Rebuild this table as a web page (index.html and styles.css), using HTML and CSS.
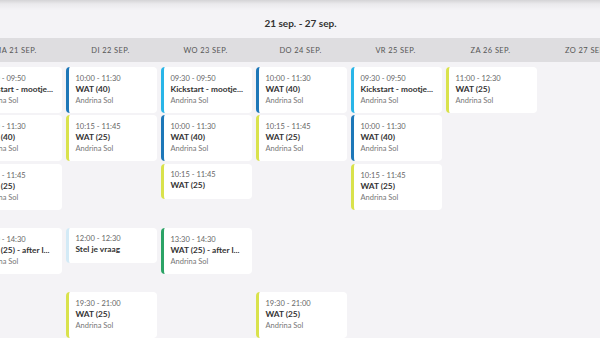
FILE: index.html
```html
<!DOCTYPE html>
<html lang="nl">
<head>
<meta charset="utf-8">
<title>Week</title>
<link rel="stylesheet" href="styles.css">
</head>
<body>
<div class="page">
  <div class="week">
    <div class="title">21 sep. - 27 sep.</div>
    <div class="days">
      <div class="day">MA 21 SEP.</div>
      <div class="day">DI 22 SEP.</div>
      <div class="day">WO 23 SEP.</div>
      <div class="day">DO 24 SEP.</div>
      <div class="day">VR 25 SEP.</div>
      <div class="day">ZA 26 SEP.</div>
      <div class="day">ZO 27 SEP.</div>
    </div>
    <div class="grid">
      <!-- MA -->
      <div class="card cyan c1 r1"><div class="time">09:30 - 09:50</div><div class="name">Kickstart - mootje...</div><div class="who">Andrina Sol</div></div>
      <div class="card blue c1 r2"><div class="time">10:00 - 11:30</div><div class="name">WAT (40)</div><div class="who">Andrina Sol</div></div>
      <div class="card yellow c1 r3"><div class="time">10:15 - 11:45</div><div class="name">WAT (25)</div><div class="who">Andrina Sol</div></div>
      <div class="card green c1 r4"><div class="time">13:30 - 14:30</div><div class="name">WAT (25) - after l...</div><div class="who">Andrina Sol</div></div>
      <!-- DI -->
      <div class="card blue c2 r1"><div class="time">10:00 - 11:30</div><div class="name">WAT (40)</div><div class="who">Andrina Sol</div></div>
      <div class="card yellow c2 r2"><div class="time">10:15 - 11:45</div><div class="name">WAT (25)</div><div class="who">Andrina Sol</div></div>
      <div class="card pale short c2 r4"><div class="time">12:00 - 12:30</div><div class="name">Stel je vraag</div></div>
      <div class="card yellow c2 r5"><div class="time">19:30 - 21:00</div><div class="name">WAT (25)</div><div class="who">Andrina Sol</div></div>
      <!-- WO -->
      <div class="card cyan c3 r1"><div class="time">09:30 - 09:50</div><div class="name">Kickstart - mootje...</div><div class="who">Andrina Sol</div></div>
      <div class="card blue c3 r2"><div class="time">10:00 - 11:30</div><div class="name">WAT (40)</div><div class="who">Andrina Sol</div></div>
      <div class="card yellow short c3 r3"><div class="time">10:15 - 11:45</div><div class="name">WAT (25)</div></div>
      <div class="card green c3 r4"><div class="time">13:30 - 14:30</div><div class="name">WAT (25) - after l...</div><div class="who">Andrina Sol</div></div>
      <!-- DO -->
      <div class="card blue c4 r1"><div class="time">10:00 - 11:30</div><div class="name">WAT (40)</div><div class="who">Andrina Sol</div></div>
      <div class="card yellow c4 r2"><div class="time">10:15 - 11:45</div><div class="name">WAT (25)</div><div class="who">Andrina Sol</div></div>
      <div class="card yellow c4 r5"><div class="time">19:30 - 21:00</div><div class="name">WAT (25)</div><div class="who">Andrina Sol</div></div>
      <!-- VR -->
      <div class="card cyan c5 r1"><div class="time">09:30 - 09:50</div><div class="name">Kickstart - mootje...</div><div class="who">Andrina Sol</div></div>
      <div class="card blue c5 r2"><div class="time">10:00 - 11:30</div><div class="name">WAT (40)</div><div class="who">Andrina Sol</div></div>
      <div class="card yellow c5 r3"><div class="time">10:15 - 11:45</div><div class="name">WAT (25)</div><div class="who">Andrina Sol</div></div>
      <!-- ZA -->
      <div class="card yellow c6 r1"><div class="time">11:00 - 12:30</div><div class="name">WAT (25)</div><div class="who">Andrina Sol</div></div>
    </div>
  </div>
</div>
</body>
</html>
```

FILE: styles.css
```css
html, body {
  margin: 0;
  padding: 0;
  width: 600px;
  height: 338px;
  overflow: hidden;
  background: #f4f3f6;
  font-family: Lato, "Noto Sans", sans-serif;
}

.page {
  width: 600px;
  height: 338px;
  overflow: hidden;
  background: linear-gradient(to bottom, rgba(0, 0, 0, 0.13) 0px, rgba(0, 0, 0, 0.04) 4px, rgba(0, 0, 0, 0) 10px);
}

.week {
  width: 665px;
  margin-left: -32px;
}

.title {
  height: 38px;
  display: flex;
  align-items: center;
  justify-content: center;
  padding-top: 8px;
  box-sizing: border-box;
  font-size: 10px;
  font-weight: 700;
  color: #333;
}

.days {
  display: grid;
  grid-template-columns: repeat(7, 95px);
  height: 24px;
  background: #dedde0;
  align-items: center;
}

.day {
  text-align: center;
  font-size: 7.5px;
  letter-spacing: 0.4px;
  color: #555;
}

.grid {
  display: grid;
  grid-template-columns: repeat(7, 95px);
  grid-template-rows: 48px 49px 64px 64px 46px;
  padding-top: 5px;
}

.card {
  box-sizing: border-box;
  margin-left: 2.5px;
  width: 91.5px;
  height: 46px;
  background: #fff;
  border-radius: 4px;
  border-left: 3px solid #1f7bbd;
  padding: 7px 2px 0 7px;
  align-self: start;
  white-space: nowrap;
  overflow: hidden;
}

.card.short { height: 35px; padding-top: 6px; }

.blue { border-left-color: #1d77b8; }
.cyan { border-left-color: #29b5e8; }
.yellow { border-left-color: #d9e24c; }
.green { border-left-color: #2ba366; }
.pale { border-left-color: #d3eaf6; }

.c1 { grid-column: 1; }
.c2 { grid-column: 2; }
.c3 { grid-column: 3; }
.c4 { grid-column: 4; }
.c5 { grid-column: 5; }
.c6 { grid-column: 6; }
.r1 { grid-row: 1; }
.r2 { grid-row: 2; }
.r3 { grid-row: 3; }
.r4 { grid-row: 4; }
.r5 { grid-row: 5; }

.time {
  font-size: 7.5px;
  line-height: 10px;
  color: #666;
}

.name {
  font-size: 8.3px;
  line-height: 11px;
  font-weight: 700;
  color: #333;
}

.who {
  font-size: 7.5px;
  line-height: 11px;
  color: #777;
}
```
